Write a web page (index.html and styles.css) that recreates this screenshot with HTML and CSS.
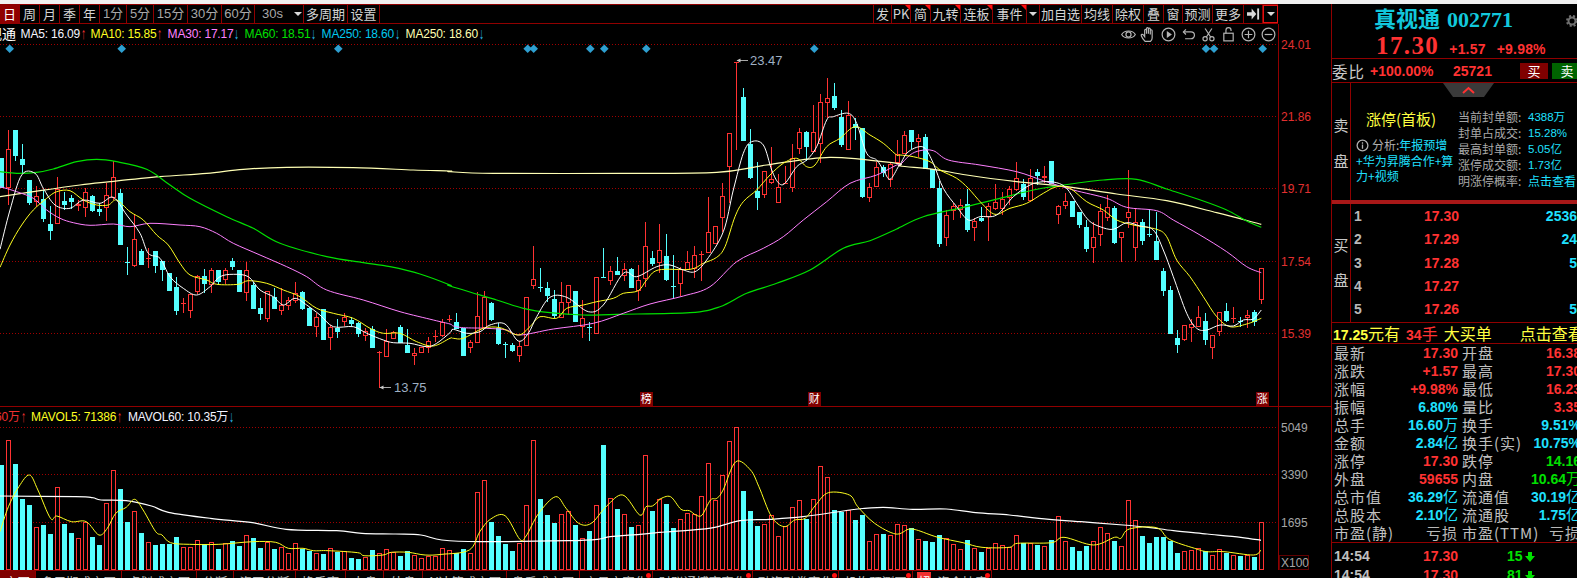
FILE: index.html
```html
<!DOCTYPE html>
<html lang="zh-CN">
<head>
<meta charset="utf-8">
<title>真视通 002771</title>
<link rel="stylesheet" href="styles.css">
</head>
<body>
<div class="app">
  <div class="strip"></div>
  <div class="workspace">
    <main class="kline">
      <nav class="toolbar">
        <div class="tools tools-left">
          <span class="tool active">日</span><span class="tool">周</span><span class="tool">月</span><span class="tool">季</span><span class="tool">年</span>
          <span class="tool dim">1分</span><span class="tool dim">5分</span><span class="tool dim">15分</span><span class="tool dim">30分</span><span class="tool dim">60分</span>
          <span class="tool dim with-caret">30s<i class="caret"></i></span><span class="tool">多周期</span><span class="tool">设置</span>
        </div>
        <div class="tools tools-right">
          <span class="tool">发</span><span class="tool corner">PK</span><span class="tool corner">简</span><span class="tool corner">九转</span><span class="tool corner">连板</span><span class="tool corner">事件</span>
          <span class="tool"><i class="caret"></i></span>
          <span class="tool">加自选</span><span class="tool">均线</span><span class="tool">除权</span><span class="tool">叠</span><span class="tool">窗</span><span class="tool">预测</span><span class="tool">更多</span>
          <span class="tool"><svg class="enter" viewBox="0 0 14 12"><path d="M0 4h5V0l5 6-5 6V8H0z"/><path d="M11 0h2v12h-2z"/></svg></span>
          <span class="tool outlined"><i class="caret"></i></span>
        </div>
      </nav>
      <div class="canvas">
        <svg id="chart" class="chart" viewBox="0 24 1331 546" width="1331" height="546"></svg>
        <div class="legend">
          <span class="stock">真视通</span>
          <span class="ma w70 c-white">MA5: 16.09<b class="up">↑</b></span>
          <span class="ma w77 c-yellow">MA10: 15.85<b class="up">↑</b></span>
          <span class="ma w77 c-pink">MA30: 17.17<b class="down">↓</b></span>
          <span class="ma w77 c-green">MA60: 18.51<b class="down">↓</b></span>
          <span class="ma w84 c-sky">MA250: 18.60<b class="down">↓</b></span>
          <span class="ma w84 c-cream">MA250: 18.60<b class="down">↓</b></span>
        </div>
        <div class="legend legend-vol">
          <span class="ma cut c-red">60万<b class="up">↑</b></span>
          <span class="ma w97 c-yellow">MAVOL5: 71386<b class="up">↑</b></span>
          <span class="ma c-white">MAVOL60: 10.35万<b class="down">↓</b></span>
        </div>
        <div class="chart-tools">
          <svg viewBox="0 0 20 20"><path d="M2 10c3-5.500 13-5.500 16 0-3 5.500-13 5.500-16 0z"/><circle cx="10" cy="10" r="3"/></svg>
          <svg viewBox="0 0 20 20"><path d="M6 18c-2-2-4-5-4.500-6.500C1 10 3 9 4 10.500l1.500 2V5a1.100 1.100 0 0 1 2.200 0v4V3a1.100 1.100 0 0 1 2.200 0v6V3.500a1.100 1.100 0 0 1 2.200 0V10V5.500a1.100 1.100 0 0 1 2.200 0V14c0 2-1 3-2 4z"/></svg>
          <svg viewBox="0 0 20 20"><circle cx="10" cy="10" r="7.500"/><polygon class="solid" points="8,6 14,10 8,14"/></svg>
          <svg viewBox="0 0 20 20"><path d="M4 7h9a3.500 3.500 0 0 1 0 8H6"/><path d="M7 4L4 7l3 3"/></svg>
          <svg viewBox="0 0 20 20"><circle cx="6" cy="15" r="2.500"/><circle cx="14" cy="15" r="2.500"/><path d="M7.500 13L14 3M12.500 13L6 3"/></svg>
          <svg viewBox="0 0 20 20"><rect x="4.500" y="8.500" width="11" height="9"/><path d="M7 8.500V5a3 3 0 0 1 6 0v1"/></svg>
          <svg viewBox="0 0 20 20"><circle cx="10" cy="10" r="7.500"/><path d="M5.500 10h9M10 5.500v9"/></svg>
          <svg viewBox="0 0 20 20"><circle cx="10" cy="10" r="7.500"/><path d="M5.500 10h9"/></svg>
        </div>
      </div>
      <nav class="tabs">
        <span class="tab on">交图</span><span class="tab">多周期成交图</span><span class="tab">点划成交图</span><span class="tab">分断</span><span class="tab">资四分断</span><span class="tab">换手率</span><span class="tab">大盘</span><span class="tab">外盘</span><span class="tab">AI决策成交图</span><span class="tab">盘后成交图</span><span class="tab dot">交易方案化</span><span class="tab dot">财联通博弈变化</span><span class="tab dot">融资融券变化</span><span class="tab dot">机构预测图</span><span class="tab dot"><em class="flag">超</em>资金持库</span>
      </nav>
    </main>

    <aside class="panel">
      <header class="head">
        <div class="name">真视通<span class="code">002771</span></div>
        <div class="price-row"><span class="price">17.30</span><span class="chg">+1.57</span><span class="chg">+9.98%</span></div>
        <svg class="gear" viewBox="0 0 12 12"><circle cx="6" cy="6" r="3.500"/><circle class="teeth" cx="6" cy="6" r="5"/></svg>
      </header>
      <div class="weibi">
        <span class="wlabel">委比</span><span class="num red wpct">+100.00%</span><span class="num red wvol">25721</span>
        <span class="btn buy">买</span><span class="btn sell">卖</span>
      </div>
      <section class="book sell-book">
        <div class="side"><span>卖</span><span>盘</span></div>
        <div class="limit">
          <div class="limit-title">涨停(首板)</div>
          <div class="limit-why"><svg class="info" viewBox="0 0 14 14"><circle cx="7" cy="7" r="5.800"/><path d="M7 6v4.500M7 3.500v1.500"/></svg><span class="gray">分析:</span>年报预增<br>+华为昇腾合作+算<br>力+视频</div>
        </div>
        <dl class="seal">
          <div><dt>当前封单额:</dt><dd>4388万</dd></div>
          <div><dt>封单占成交:</dt><dd>15.28%</dd></div>
          <div><dt>最高封单额:</dt><dd>5.05亿</dd></div>
          <div><dt>涨停成交额:</dt><dd>1.73亿</dd></div>
          <div><dt>明涨停概率:</dt><dd class="cjk">点击查看</dd></div>
        </dl>
        <svg class="handle" viewBox="0 0 51 14"><polygon points="0,0 51,0 41,14 10,14"/><path d="M20 10l5.500-5 5.500 5"/></svg>
      </section>
      <div class="split"></div>
      <section class="book buy-book">
        <div class="side"><span>买</span><span>盘</span></div>
        <div class="levels">
          <div class="level"><b>1</b><span class="num red">17.30</span><span class="num cyan">2536</span></div>
          <div class="level"><b>2</b><span class="num red">17.29</span><span class="num cyan">24</span></div>
          <div class="level"><b>3</b><span class="num red">17.28</span><span class="num cyan">5</span></div>
          <div class="level"><b>4</b><span class="num red">17.27</span><span class="num cyan"></span></div>
          <div class="level"><b>5</b><span class="num red">17.26</span><span class="num cyan">5</span></div>
        </div>
      </section>
      <div class="bigorder">
        <span><b class="num yellow">17.25</b>元有</span><span class="red"><b class="num">34</b>手</span><span>大买单</span><span class="look">点击查看</span>
      </div>
      <div class="stats">
        <span>最新</span><span class="num red">17.30</span><span>开盘</span><span class="num red">16.38</span>
        <span>涨跌</span><span class="num red">+1.57</span><span>最高</span><span class="num red">17.30</span>
        <span>涨幅</span><span class="num red">+9.98%</span><span>最低</span><span class="num red">16.23</span>
        <span>振幅</span><span class="num cyan">6.80%</span><span>量比</span><span class="num red">3.35</span>
        <span>总手</span><span class="num cyan">16.60<u>万</u></span><span>换手</span><span class="num cyan">9.51%</span>
        <span>金额</span><span class="num cyan">2.84<u>亿</u></span><span>换手(实)</span><span class="num cyan">10.75%</span>
        <span>涨停</span><span class="num red">17.30</span><span>跌停</span><span class="num green">14.16</span>
        <span>外盘</span><span class="num red">59655</span><span>内盘</span><span class="num green">10.64<u>万</u></span>
        <span>总市值</span><span class="num cyan">36.29<u>亿</u></span><span>流通值</span><span class="num cyan">30.19<u>亿</u></span>
        <span>总股本</span><span class="num cyan">2.10<u>亿</u></span><span>流通股</span><span class="num cyan">1.75<u>亿</u></span>
        <span>市盈(静)</span><span class="loss">亏损</span><span>市盈(TTM)</span><span class="loss">亏损</span>
      </div>
      <div class="trades">
        <div class="trade"><b>14:54</b><span class="num red">17.30</span><span class="num green">15<svg class="fall" viewBox="0 0 10 10"><polygon points="3,0 7,0 7,4 10,4 5,10 0,4 3,4"/></svg></span></div>
        <div class="trade"><b>14:54</b><span class="num red">17.30</span><span class="num green">81<svg class="fall" viewBox="0 0 10 10"><polygon points="3,0 7,0 7,4 10,4 5,10 0,4 3,4"/></svg></span></div>
      </div>
    </aside>
  </div>
</div>
<script src="chart.js"></script>
</body>
</html>
```
FILE: styles.css
```css
* { box-sizing: border-box; }
html, body { margin: 0; height: 100%; background: #000; overflow: hidden; }
body { font-family: "Noto Sans CJK SC", sans-serif; color: #c8c8c8; }

.app { width: 1577px; height: 578px; overflow: hidden; display: flex; flex-direction: column; }
.strip { height: 4px; flex: none; background: #f0f0f0; }
.workspace { flex: 1; display: grid; grid-template-columns: 1331px 246px; min-height: 0; }
.kline { display: flex; flex-direction: column; min-width: 0; }

/* toolbar */
.toolbar { height: 20px; width: 1278px; flex: none; display: flex; justify-content: space-between; border-top: 1px solid #900000; border-bottom: 1px solid #900000; }
.tools { display: grid; height: 18px; }
.tools-left { grid-template-columns: 20px 20px 20px 20px 20px 27px 27px 34px 34px 33px 49px 44px 32px; }
.tools-right { grid-template-columns: 19px 19px 20px 30px 32px 34px 13px 42px 31px 31px 20px 19px 30px 31px 19px 15px; }
.tool { position: relative; display: flex; align-items: center; justify-content: center; border-right: 1px solid #900000; font-size: 13px; line-height: 18px; color: #d4d4d4; white-space: nowrap; overflow: hidden; }
.tools-right .tool:first-child { border-left: 1px solid #900000; }
.tool.active { background: #900000; color: #fff; }
.tool.dim { color: #a8a8a8; font-family: "Liberation Sans", "Noto Sans CJK SC", sans-serif; }
.with-caret { justify-content: flex-start; padding-left: 7px; }
.with-caret .caret { margin-left: 11px; }
.caret { width: 0; height: 0; border: 4px solid transparent; border-top: 4px solid #d8d8d8; border-bottom: 0; display: block; }
.corner::after { content: ""; position: absolute; right: 0; top: 0; border-top: 5px solid #ff1010; border-left: 5px solid transparent; }
.outlined { border: 1px solid #e01010; }
.enter { width: 13px; height: 12px; fill: #d8d8d8; }

/* chart stage */
.canvas { position: relative; height: 546px; flex: none; overflow: hidden; }
.chart { display: block; position: absolute; left: 0; top: 0; }
.chart .crisp { shape-rendering: crispEdges; }
.chart text { font-family: "Liberation Sans", sans-serif; font-size: 12px; }
.chart .axis-red { fill: #e23030; }
.chart .axis-gray { fill: #a6a6a6; }
.chart .peak { fill: #9fb0c4; font-size: 13px; }
.chart .badge { fill: #fff; font-family: "Noto Sans CJK SC", sans-serif; font-size: 11px; }

.legend { position: absolute; left: 0; top: 0; height: 20px; display: flex; align-items: center; font: 12px/20px "Liberation Sans", "Noto Sans CJK SC", sans-serif; letter-spacing: -.2px; white-space: nowrap; }
.legend-vol { top: 383px; }
.stock { flex: none; margin-left: -26px; width: 46.600px; font-size: 14px; color: #fff; letter-spacing: 0; }
.ma { display: block; flex: none; }
.ma b { display: inline-block; width: 6px; font-size: 16px; line-height: 12px; font-weight: 400; transform: scaleX(.6); transform-origin: 0 50%; vertical-align: -1px; margin-left: 1px; }
.cut { width: 36px; margin-left: -5px; }
.w70 { width: 70px; }
.w77 { width: 77px; }
.w84 { width: 84px; }
.w97 { width: 97px; }
.up { color: #f03030; }
.down { color: #29b6e8; }
.c-white { color: #f4f4ff; }
.c-yellow { color: #ffff20; }
.c-pink { color: #ff80ff; }
.c-green { color: #00e000; }
.c-sky { color: #00c8f0; }
.c-cream { color: #ffffb0; }
.c-red { color: #f03030; }

.chart-tools { position: absolute; top: 0; right: 53px; height: 20px; display: flex; align-items: center; }
.chart-tools svg { width: 17px; height: 17px; margin: 0 1.500px; fill: none; stroke: #b4b4b4; stroke-width: 1.400; }
.chart-tools .solid { fill: #b4b4b4; stroke: none; }

/* bottom tabs */
.tabs { flex: 1; width: 992px; display: grid; grid-template-columns: 36px 86px 75px 37px 62px 50px 38px 39px 84px 73px 73px 100px 86px 74px 79px; border-top: 1px solid #900000; overflow: hidden; }
.tab { position: relative; height: 20px; border-right: 1px solid #900000; padding-top: 1px; font-size: 12.500px; line-height: 20px; text-align: center; white-space: nowrap; overflow: hidden; color: #c0c0c0; }
.tab.on { background: #800000; color: #fff; }
.tab.dot::after { content: ""; position: absolute; right: 1px; top: 2px; width: 5px; height: 5px; border-radius: 50%; background: #ff1010; }
.flag { font-style: normal; background: #f03030; color: #fff; padding: 0 1px; margin-right: 6px; }

/* right panel */
.panel { position: relative; border-left: 1px solid #900000; display: flex; flex-direction: column; overflow: hidden; font-family: "Noto Sans CJK SC", sans-serif; }
.num { font: bold 14px/18px "Liberation Sans", "Noto Sans CJK SC", sans-serif; }
.num u { text-decoration: none; font-weight: 400; font-size: 15px; }
.red { color: #ff3232; }
.cyan { color: #1fe0ff; }
.green { color: #00e000; }
.yellow { color: #ffff40; }
.gray { color: #b0b0b0; }

.head { position: relative; height: 55px; flex: none; border-bottom: 1px solid #900000; }
.name { height: 26px; padding-left: 42px; font-size: 22px; line-height: 26px; font-weight: 700; color: #12c8dc; white-space: nowrap; }
.code { font-family: "Liberation Serif", serif; font-size: 22px; margin-left: 7px; }
.price-row { display: flex; align-items: baseline; height: 29px; padding: 1px 0 0 44px; color: #ff3232; font-family: "Liberation Sans", sans-serif; font-weight: 700; font-size: 14px; line-height: 29px; }
.price { font-family: "Liberation Serif", serif; font-size: 25px; letter-spacing: 1.400px; margin-right: 10px; }
.chg { margin-right: 11px; letter-spacing: .2px; }
.gear { position: absolute; left: 234px; top: 11px; width: 12px; height: 12px; fill: none; stroke: #707070; }
.gear circle { stroke-width: 2; }
.gear .teeth { stroke-dasharray: 2 2; }

.weibi { position: relative; height: 24px; flex: none; border-bottom: 1px solid #900000; display: flex; align-items: center; }
.weibi > span { flex: none; }
.wlabel { width: 38px; font-size: 15.500px; letter-spacing: 1px; color: #c8c8c8; white-space: nowrap; }
.wpct { width: 83px; }
.wvol { width: 67px; }
.btn { height: 16px; width: 28px; font-size: 13px; line-height: 16px; text-align: center; color: #fff; margin-right: 4px; }
.btn.buy { background: #800000; }
.btn.sell { background: #006400; width: 30px; margin-right: 0; }

.book { position: relative; display: flex; flex: none; }
.sell-book { height: 117px; }
.buy-book { height: 118px; }
.side { width: 19px; flex: none; border-right: 1px solid #900000; display: flex; flex-direction: column; align-items: center; font-size: 15px; line-height: 20px; color: #c8c8c8; }
.sell-book .side { padding-top: 32px; gap: 16px; }
.buy-book .side { padding-top: 31px; gap: 15px; }

.limit { width: 107px; flex: none; padding: 27px 0 0 5px; font-size: 12px; }
.limit-title { padding-left: 10px; font-size: 15px; line-height: 18px; color: #ffff40; white-space: nowrap; }
.limit-why { margin-top: 9px; line-height: 15.500px; color: #1fe0ff; white-space: nowrap; }
.info { width: 13px; height: 13px; fill: none; stroke: #b0b0b0; stroke-width: 1.400; vertical-align: -2px; margin-right: 3px; }
.seal { margin: 26px 0 0; font-size: 12px; line-height: 16px; }
.seal div { display: flex; white-space: nowrap; }
.seal dt { width: 70px; color: #a8a8a8; }
.seal dd { margin: 0; color: #1fe0ff; font-family: "Liberation Sans", "Noto Sans CJK SC", sans-serif; font-size: 11.500px; }
.seal dd.cjk { font-family: "Noto Sans CJK SC", sans-serif; font-size: 12px; }
.handle { position: absolute; left: 111px; top: 0; width: 51px; height: 14px; }
.handle polygon { fill: #3a3a3a; }
.handle path { fill: none; stroke: #ff3232; stroke-width: 2; }

.split { height: 4px; flex: none; background: #a81818; }
.levels { flex: 1; display: flex; flex-direction: column; padding: 0 0 1px; }
.level { flex: 1; display: grid; grid-template-columns: 70px 34px 1fr; align-items: center; padding: 0 0 0 3px; }
.level b { font: bold 14px/18px "Liberation Sans", sans-serif; color: #b8b8b8; }
.level .cyan { text-align: right; }

.bigorder { height: 22px; flex: none; border-top: 1px solid #900000; border-bottom: 1px solid #900000; display: flex; align-items: center; gap: 6px; padding-left: 1px; font-size: 16px; line-height: 20px; color: #ffff40; white-space: nowrap; }
.look { margin-left: 22px; }

.stats { height: 198px; flex: none; display: grid; grid-template-columns: 63px 61px 68px 54px; grid-auto-rows: 18px; padding-left: 2px; font-size: 15px; line-height: 18px; letter-spacing: 1px; color: #c0c0c0; white-space: nowrap; }
.stats span:nth-child(4n+3) { padding-left: 4px; }
.stats .num { text-align: right; letter-spacing: 0; }
.stats span:nth-child(4n) { margin-left: -4px; margin-right: -1px; }
.stats .loss { text-align: right; color: #b8b8b8; letter-spacing: 1px; }

.trades { border-top: 1px solid #900000; flex: none; padding-top: 3px; }
.trade { height: 19px; display: grid; grid-template-columns: 89px 84px 1fr; align-items: center; padding-left: 2px; }
.trade b { font: bold 14px/18px "Liberation Sans", sans-serif; color: #c0c0c0; }
.fall { width: 10px; height: 10px; fill: #00e000; margin-left: 2px; vertical-align: -1px; }
```
FILE: chart.js
```js
// Daily candles and volume for 002771, read off as chart coordinates.
// Candle: [rising, bodyTop, bodyBottom, wickTop, wickBottom]
const block1 = [ // y = 120 + v/3
[0,113,200,113,200],[1,88,200,30,255],[0,30,105,30,122],[0,117,132,72,158],[0,180,245,180,255],[1,229,243,198,262],[0,237,293,210,305],[0,312,330,258,360],[1,207,308,170,312],[0,243,252,217,270],
[0,234,244,225,268],[1,253,254,240,272],[1,217,262,205,290],[0,228,270,225,275],[0,266,272,248,288],[1,226,262,190,303],[1,172,232,122,240],[0,219,371,208,371],[0,427,427,382,465],[1,358,434,285,440],
[0,393,432,388,436],[1,413,413,385,443],[0,393,434,393,458],[0,423,446,423,483],[0,459,510,459,512],[0,501,570,470,585],[1,549,549,535,578],[1,523,571,523,593],[1,469,512,465,522],[0,468,489,448,518],
[1,451,493,445,518],[0,451,483,451,495],[1,451,477,445,493],[0,423,437,415,450],[0,451,513,451,515],[1,451,517,427,543],[0,495,564,485,567],[0,564,579,535,600],[1,514,593,514,605],[0,531,564,503,568],
[1,554,571,505,585],[1,541,556,530,570],[1,518,541,487,548],[0,516,565,514,570],[0,563,615,560,618],[1,592,617,580,652],[0,566,657,566,660],[1,622,650,615,690],[0,625,632,598,654],[1,592,604,580,617],
[0,600,608,590,618],[0,610,638,605,650],[1,634,645,625,663],[0,628,681,618,683],[1,696,696,692,805],[1,663,709,628,710],[1,637,653,632,655],[0,622,666,615,668],[0,675,695,628,695],[1,698,706,685,735],
[1,682,697,680,697],[1,662,681,652,698],[1,648,648,630,665],[1,606,646,598,652],[1,597,597,585,605]];
const block2 = [ // y = 50 + v/3
[0,816,834,790,835],[0,833,914,833,914],[1,877,892,870,908],[1,799,875,725,875],[1,742,830,723,835],[0,760,806,755,812],[0,833,879,820,885],[0,883,883,875,923],[0,885,899,880,905],[1,889,916,872,935],
[1,740,884,740,885],[1,688,704,588,717],[0,712,712,655,725],[0,715,735,697,755],[0,748,795,720,805],[1,757,802,697,802],[1,706,755,706,795],[0,723,812,723,812],[1,805,827,750,865],[0,831,831,816,873],
[1,680,848,680,850],[0,680,680,595,685],[1,664,689,648,705],[0,664,671,622,675],[1,656,674,640,692],[0,657,711,655,713],[1,689,721,645,752],[1,589,685,517,712],[0,624,639,603,648],[1,599,635,522,668],
[0,618,687,552,693],[0,707,707,615,748],[1,657,700,650,738],[1,637,657,603,660],[1,616,655,588,684],[1,611,611,604,692],[1,545,605,442,608],[1,527,578,527,580],[1,439,502,400,545],[1,248,347,248,460],
[1,35,35,35,300],[0,142,269,115,270],[0,282,381,238,388],[0,423,440,335,480],[1,364,433,364,445],[1,386,395,292,403],[1,412,455,372,458],[1,398,398,348,402],[1,323,412,283,425],[1,247,293,235,312],
[0,246,287,243,332],[1,247,302,165,305],[1,157,280,132,338],[1,143,155,85,203],[0,139,171,100,180],[0,200,282,180,290],[1,195,298,153,300],[0,222,232,205,270],[0,235,437,235,443],[1,412,440,400,455],
[1,352,409,335,410],[0,352,367,345,380],[1,343,387,340,410],[1,312,335,270,340]];
const block3 = [ // y = 120 + v/3
[1,46,98,33,100],[0,30,62,30,87],[1,55,62,43,110],[0,52,145,42,145],[0,148,200,148,200],[0,204,369,183,380],[1,286,352,270,378],[1,257,270,250,300],[1,256,266,237,293],[0,252,326,207,335],
[1,304,322,295,362],[0,293,300,262,305],[1,257,287,250,362],[1,245,265,192,270],[1,236,263,216,285],[1,208,230,197,255],[1,173,206,126,213],[0,192,227,178,240],[1,173,240,148,245],[0,157,164,148,195],
[1,167,172,138,190],[0,123,190,123,190],[1,259,283,255,312],[1,242,256,220,268],[0,243,287,243,288],[0,276,311,276,325],[0,322,384,300,395],[1,352,382,305,430],[1,274,343,253,378],[1,260,291,226,303],
[0,265,367,258,372],[1,337,352,337,425],[1,277,292,150,325],[1,305,382,265,422],[0,307,359,298,375],[0,342,342,268,350],[0,363,416,277,416],[0,454,510,445,527],[0,511,639,498,641],[0,655,671,630,698],
[1,616,656,616,662],[1,613,622,598,667],[1,592,617,558,620],[0,604,656,580,675],[1,646,680,646,716],[1,577,634,577,647],[0,574,600,549,605],[1,595,595,562,610],[0,604,604,590,620],[1,586,591,570,623],
[0,577,603,570,617],[1,445,536,445,552]];

// Bar tops, y = 400 + v/3
const volumeTops = [
195,120,192,297,315,382,375,402,262,372, 399,414,367,411,435,310,211,267,366,334,
399,427,435,432,432,411,442,442,421,432, 427,447,430,423,438,406,414,444,427,447,
441,460,430,447,453,460,462,445,455,453, 474,477,472,450,460,448,455,468,453,466,
475,468,468,445,451,458,447,460,277,241, 366,408,432,453,430,316,120,297,345,369,
343,334,375,414,393,316,135,295,327,343, 381,376,166,333,298,
312,384,358,340,343, 289,190,300,226,124,82,273,333,378,373, 346,409,378,322,301,357,298,199,232,330,
336,330,360,345,424, 403,402,406,373,376,385,418,423,426,406, 415,433,448,421,445,456,444,430,436,441,
406,430,428,435,439, 421,349,424,441,453,438,424,382,400,423, 439,301,361,408,429,411,411,423,459,454,
451,445,454,466,448, 459,466,468,466,471,367];

const VOL_BASE = 570;
const candles = [
  ...block1.map(c => scale(c, 120)),
  ...block2.map(c => scale(c, 50)),
  ...block3.map(c => scale(c, 120)),
];
function scale(c, oy) {
  return { up: !!c[0], top: oy + c[1] / 3, bot: oy + c[2] / 3, hi: oy + c[3] / 3, lo: oy + c[4] / 3 };
}

// Moving averages, each sampled across the three chart stretches.
const pts3 = (ox, oy, list) => list.map(([x, y]) => [ox + x / 3, oy + y / 3]);
const ptsV = (ox, list) => list.map(([x, y]) => [ox + x / 2.376, 400 + y / 3]);

const lines = [
  { color: '#ffffb4', width: 1.2, pts: [
    ...pts3(0, 120, [[0,230],[120,212],[240,195],[330,185],[480,170],[620,160],[730,148],[860,142],[1060,143],[1240,150],[1350,153]]),
    ...pts3(450, 50, [[0,365],[130,370],[510,370],[800,367],[950,345],[1140,322],[1340,340]]),
    ...pts3(900, 120, [[0,138],[100,148],[200,165],[350,185],[500,200],[650,222],[800,242],[950,278],[1084,313]]) ] },
  { color: '#00e000', width: 1.2, pts: [
    ...pts3(0, 120, [[0,155],[50,160],[110,157],[160,147],[230,125],[290,118],[350,125],[440,148],[510,195],[570,235],[680,290],[760,325],[840,370],[980,410],[1090,428],[1170,440],[1260,462],[1350,495]]),
    ...pts3(450, 50, [[0,708],[140,750],[220,775],[300,788],[400,795],[500,793],[720,788],[810,770],[890,730],[980,700],[1080,660],[1180,595],[1260,572],[1340,537]]),
    ...pts3(900, 120, [[0,322],[70,290],[190,262],[300,235],[400,210],[470,198],[610,180],[710,178],[800,207],[910,243],[980,270],[1040,303],[1084,322]]) ] },
  { color: '#ff80ff', width: 1, pts: [
    ...pts3(0, 120, [[0,200],[50,215],[100,235],[140,270],[180,295],[220,308],[270,316],[340,312],[390,320],[450,310],[540,315],[600,320],[650,340],[700,370],[780,405],[860,440],[920,470],[980,510],[1090,540],[1200,575],[1300,600],[1350,612]]),
    ...pts3(450, 50, [[10,828],[40,833],[110,835],[170,840],[210,855],[310,837],[430,820],[520,790],[600,762],[700,738],[780,710],[860,635],[940,595],[1000,560],[1060,510],[1130,455],[1200,400],[1280,375],[1340,345]]),
    ...pts3(900, 120, [[0,135],[30,105],[60,92],[100,92],[145,120],[240,135],[350,155],[430,182],[520,210],[620,235],[680,262],[770,272],[820,300],[900,345],[980,395],[1040,440],[1084,458]]) ] },
  { color: '#ffff20', width: 1, pts: [
    ...pts3(0, 120, [[0,442],[30,375],[65,315],[100,270],[140,235],[170,215],[210,212],[250,240],[290,255],[325,255],[350,240],[390,275],[430,300],[470,345],[505,375],[540,430],[570,465],[620,480],[650,493],[715,493],[745,482],[800,490],[850,510],[900,530],[950,565],[1000,580],[1060,595],[1110,625],[1150,640],[1200,640],[1250,665],[1300,678],[1350,655]]),
    ...pts3(450, 50, [[10,865],[40,865],[100,835],[150,833],[205,855],[240,830],[270,800],[320,805],[350,775],[400,765],[440,755],[490,745],[520,730],[565,722],[590,690],[625,660],[720,658],[760,640],[800,622],[825,590],[855,500],[880,455],[920,420],[960,375],[1000,340],[1040,325],[1070,350],[1095,345],[1130,290],[1170,265],[1215,230],[1260,255],[1300,280],[1340,315]]),
    ...pts3(900, 120, [[0,105],[40,110],[90,125],[120,150],[170,175],[205,205],[245,250],[285,283],[330,265],[380,250],[430,220],[470,200],[510,205],[560,245],[610,270],[650,300],[700,315],[770,328],[800,350],[830,420],[870,470],[910,530],[950,590],[990,620],[1040,612],[1084,595]]) ] },
  { color: '#ffffff', width: 1, pts: [
    ...pts3(0, 120, [[0,388],[30,270],[65,165],[105,160],[130,205],[165,255],[210,265],[250,240],[300,250],[340,232],[380,285],[420,340],[445,400],[480,415],[510,470],[550,505],[590,525],[630,500],[660,470],[700,463],[745,470],[780,510],[820,530],[850,555],[885,535],[920,555],[960,585],[1000,620],[1060,620],[1100,640],[1150,660],[1180,668],[1230,670],[1280,680],[1310,670],[1350,638]]),
    ...pts3(450, 50, [[10,838],[50,850],[90,845],[120,825],[165,822],[205,873],[235,850],[260,800],[300,742],[350,742],[415,785],[460,765],[520,670],[560,680],[620,650],[660,645],[700,660],[735,665],[770,630],[820,545],[850,420],[880,310],[905,275],[940,285],[965,360],[985,398],[1005,400],[1040,350],[1070,330],[1100,290],[1130,210],[1150,200],[1195,190],[1220,220],[1250,310],[1280,330],[1300,360],[1320,388],[1345,350]]),
    ...pts3(900, 120, [[0,135],[20,100],[50,82],[75,85],[100,130],[130,205],[170,260],[205,300],[240,290],[290,285],[340,230],[390,195],[430,185],[470,188],[500,205],[530,250],[565,300],[600,320],[640,328],[680,308],[720,318],[760,330],[790,390],[820,470],[860,580],[890,625],[920,630],[960,615],[1000,618],[1030,600],[1060,597],[1084,570]]) ] },
  { color: '#ffffff', width: 1.2, pts: [
    ...ptsV(0, [[0,288],[180,290],[220,293],[240,300],[300,302],[360,318],[400,337],[500,355],[600,368],[680,388],[800,392],[860,400],[940,402],[1000,405],[1050,420],[1140,425],[1350,422],[1420,418],[1450,410],[1520,403],[1560,398]]),
    ...ptsV(660, [[0,397],[60,392],[130,382],[190,362],[260,358],[340,350],[470,327],[530,322],[600,328],[680,327],[750,338],[830,345],[900,355],[1000,365],[1100,375],[1160,382],[1220,392],[1300,402],[1380,412],[1428,421]]) ] },
  { color: '#ffff20', width: 1, pts: [
    ...ptsV(0, [[0,395],[20,320],[45,260],[70,225],[90,270],[120,355],[135,348],[170,365],[205,365],[235,405],[255,385],[275,340],[300,322],[320,298],[340,330],[370,395],[385,405],[405,428],[450,433],[520,433],[600,425],[655,427],[685,445],[720,445],[745,452],[780,452],[850,458],[865,467],[910,465],[930,457],[970,457],[1010,465],[1050,463],[1115,450],[1140,395],[1165,358],[1200,347],[1235,418],[1250,408],[1280,340],[1320,290],[1345,325],[1375,370],[1405,370],[1440,320],[1480,285],[1520,345],[1535,320],[1550,318],[1565,302]]),
    ...ptsV(660, [[0,297],[25,290],[50,328],[70,332],[85,345],[100,345],[120,300],[135,295],[150,270],[180,185],[215,210],[235,260],[265,350],[295,380],[320,360],[345,355],[370,315],[400,278],[450,285],[470,320],[510,370],[560,402],[590,388],[610,390],[660,412],[720,428],[765,442],[830,442],[850,430],[930,428],[960,412],[1030,435],[1080,412],[1095,415],[1115,387],[1180,383],[1210,418],[1270,445],[1300,455],[1340,455],[1410,465],[1428,450]]) ] },
];

const RED = '#ff3232', CYAN = '#55ffff', GRID = '#a00000', FRAME = '#900000';
const cx = k => 1.5 + 7 * k;
const parts = [];

// Grid
[44.5, 116.5, 188.5, 261.5, 333.5, 427.5, 474.5, 522.5].forEach(y => {
  parts.push(`<line class="crisp" x1="0" x2="1278" y1="${y}" y2="${y}" stroke="${GRID}" stroke-dasharray="1 2"/>`);
});

// Volume bars
volumeTops.forEach((v, k) => {
  const c = candles[k];
  const top = Math.round(400 + v / 3) + 0.5;
  const h = VOL_BASE - top - 0.5;
  parts.push(c.up
    ? `<rect class="crisp" x="${cx(k) - 2}" y="${top}" width="4" height="${h}" fill="#000" stroke="${RED}"/>`
    : `<rect class="crisp" x="${cx(k) - 2.5}" y="${top - 0.5}" width="5" height="${h + 1}" fill="${CYAN}"/>`);
});

// Candles
candles.forEach((c, k) => {
  const x = cx(k), col = c.up ? RED : CYAN;
  const top = Math.round(c.top) + 0.5, bot = Math.round(c.bot) + 0.5;
  parts.push(`<line class="crisp" x1="${x}" x2="${x}" y1="${Math.round(c.hi)}" y2="${Math.round(c.lo)}" stroke="${col}"/>`);
  if (bot - top < 1) {
    parts.push(`<line class="crisp" x1="${x - 2.5}" x2="${x + 2.5}" y1="${top}" y2="${top}" stroke="${col}"/>`);
  } else if (c.up) {
    parts.push(`<rect class="crisp" x="${x - 2}" y="${top}" width="4" height="${bot - top}" fill="#000" stroke="${col}"/>`);
  } else {
    parts.push(`<rect class="crisp" x="${x - 2.5}" y="${top - 0.5}" width="5" height="${bot - top + 1}" fill="${col}"/>`);
  }
});

// Averages, smoothed through their samples
function curve(p) {
  let d = `M${p[0][0].toFixed(1)} ${p[0][1].toFixed(1)}`;
  for (let i = 0; i < p.length - 1; i++) {
    const a = p[Math.max(i - 1, 0)], b = p[i], c = p[i + 1], e = p[Math.min(i + 2, p.length - 1)];
    const c1 = [b[0] + (c[0] - a[0]) / 6, b[1] + (c[1] - a[1]) / 6];
    const c2 = [c[0] - (e[0] - b[0]) / 6, c[1] - (e[1] - b[1]) / 6];
    d += `C${c1[0].toFixed(1)} ${c1[1].toFixed(1)} ${c2[0].toFixed(1)} ${c2[1].toFixed(1)} ${c[0].toFixed(1)} ${c[1].toFixed(1)}`;
  }
  return d;
}
lines.forEach(l => parts.push(`<path d="${curve(l.pts)}" fill="none" stroke="${l.color}" stroke-width="${l.width}"/>`));

// Signal diamonds
[9.7, 121.7, 338.3, 527.7, 533.7, 590.3, 604.3, 646.3, 814.3, 1206, 1214, 1262.7].forEach(x => {
  parts.push(`<polygon points="${x - 4.3},48.7 ${x},44.4 ${x + 4.3},48.7 ${x},53" fill="#2e9fd0"/>`);
});

// High and low marks
[[736.5, 748, 60.5, '23.47', 750], [379.5, 391, 387.5, '13.75', 394]].forEach(([a, b, y, t, tx]) => {
  parts.push(`<path class="crisp" d="M${a} ${y}H${b}" stroke="#a8a8a8"/><path d="M${a} ${y}l4-2v4z" fill="#c8c8c8"/>`);
  parts.push(`<text class="peak" x="${tx}" y="${y + 4.5}">${t}</text>`);
});

// Event badges
[[640, '榜'], [808, '财'], [1256, '涨']].forEach(([x, t]) => {
  parts.push(`<rect class="crisp" x="${x}" y="392" width="12.5" height="13.5" fill="#800000"/>`);
  parts.push(`<text class="badge" x="${x + 0.8}" y="403">${t}</text>`);
});

// Frame
parts.push(`<path class="crisp" d="M1278.5 24V570M0 406.500H1331" stroke="${FRAME}" fill="none"/>`);

// Axis
[[48.5, '24.01'], [120.5, '21.86'], [192.5, '19.71'], [265.5, '17.54'], [337.5, '15.39']].forEach(([y, t]) => {
  parts.push(`<text class="axis-red" x="1281" y="${y}">${t}</text>`);
});
[[432, '5049'], [479, '3390'], [526.5, '1695']].forEach(([y, t]) => {
  parts.push(`<text class="axis-gray" x="1281" y="${y}">${t}</text>`);
});
parts.push(`<rect class="crisp" x="1279.5" y="555.5" width="29" height="14" fill="none" stroke="#600000"/>`);
parts.push(`<text class="axis-gray" x="1281" y="566.5">X100</text>`);

document.getElementById('chart').innerHTML = parts.join('');
```
